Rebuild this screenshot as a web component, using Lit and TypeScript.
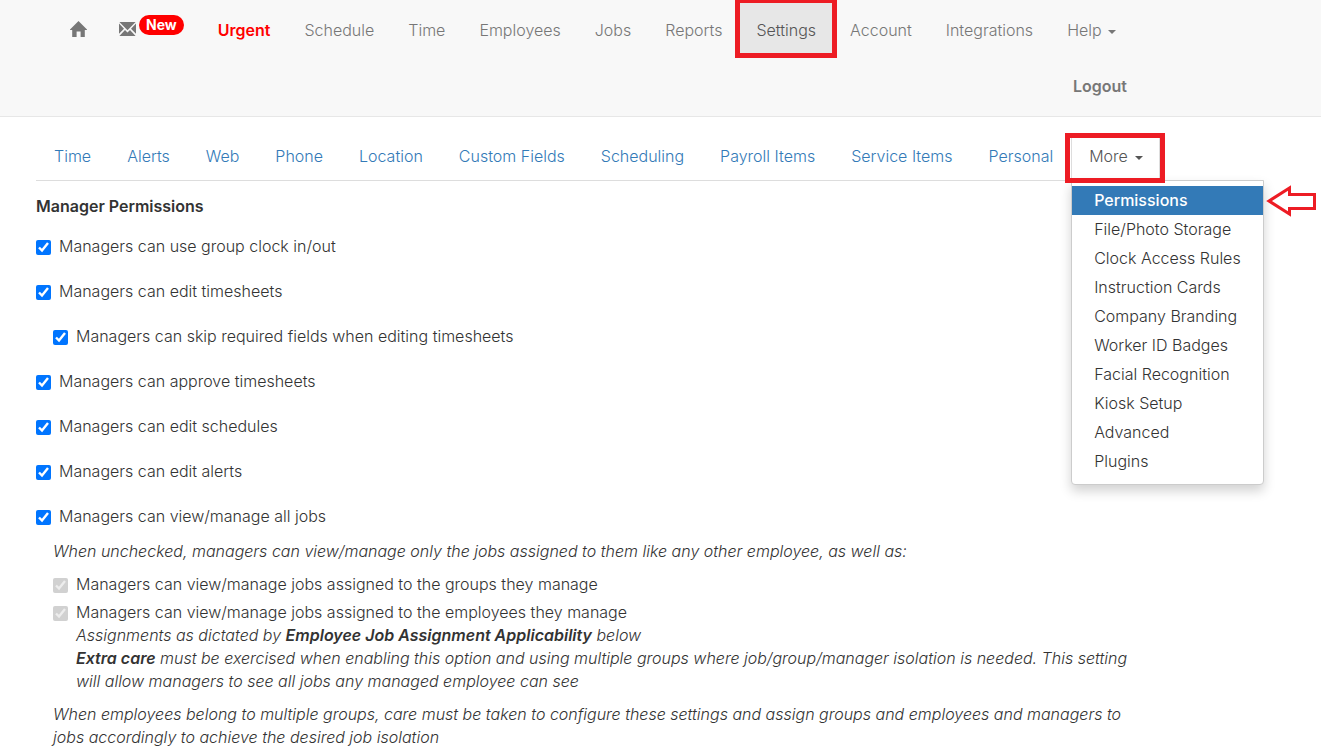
import { LitElement, html, css, svg } from "lit";
import { customElement, property, state } from "lit/decorators.js";

const MAIN_LINKS = ["Schedule", "Time", "Employees", "Jobs", "Reports", "Settings", "Account", "Integrations"];

const TABS = [
  "Time",
  "Alerts",
  "Web",
  "Phone",
  "Location",
  "Custom Fields",
  "Scheduling",
  "Payroll Items",
  "Service Items",
  "Personal",
];

const MORE_ITEMS = [
  "Permissions",
  "File/Photo Storage",
  "Clock Access Rules",
  "Instruction Cards",
  "Company Branding",
  "Worker ID Badges",
  "Facial Recognition",
  "Kiosk Setup",
  "Advanced",
  "Plugins",
];

const OPTIONS = [
  { id: "clock", label: "Managers can use group clock in/out", nested: false },
  { id: "edit-ts", label: "Managers can edit timesheets", nested: false },
  { id: "skip", label: "Managers can skip required fields when editing timesheets", nested: true },
  { id: "approve", label: "Managers can approve timesheets", nested: false },
  { id: "schedules", label: "Managers can edit schedules", nested: false },
  { id: "alerts", label: "Managers can edit alerts", nested: false },
  { id: "jobs", label: "Managers can view/manage all jobs", nested: false },
];

const homeIcon = svg`<svg class="icon" width="17" height="16" viewBox="0 0 17 16" aria-hidden="true">
  <path fill="currentColor" d="M8.5 0 L17 8.4 V9 H14.8 V16 H10.6 V10.4 H6.6 V16 H2.2 V9 H0 V8.4 Z"/>
</svg>`;

const mailIcon = svg`<svg class="icon" width="17" height="14" viewBox="0 0 17 14" aria-hidden="true">
  <path fill="currentColor" d="M0.4 0 H16.6 L8.5 8.2 Z M0 1.6 L5 6.8 L0 11.8 Z M17 1.6 L12 6.8 L17 11.8 Z M0.4 14 L6 7.9 L8.5 10.4 L11 7.9 L16.6 14 Z"/>
</svg>`;

@customElement("top-nav")
export class TopNav extends LitElement {
  static styles = css`
    :host {
      display: block;
      background: #f8f8f8;
      border-bottom: 1px solid #e7e7e7;
    }
    .inner {
      display: flex;
      flex-direction: column;
      padding: 2px 177px 2px 53px;
    }
    .links {
      display: flex;
      list-style: none;
      margin: 0;
      padding: 0;
    }
    .links.end {
      justify-content: flex-end;
    }
    .item {
      position: relative;
    }
    .link {
      display: flex;
      align-items: center;
      height: 56px;
      padding: 0 17px;
      color: #777;
      text-decoration: none;
      white-space: nowrap;
    }
    .compact {
      padding: 0 17px 0 15px;
    }
    .urgent {
      color: #f00;
      font-weight: 600;
    }
    .strong {
      font-weight: 600;
    }
    .active {
      background: #e7e7e7;
      color: #555;
    }
    .icon {
      display: block;
      margin-bottom: 3px;
    }
    .badge {
      margin: 0 0 11px 3px;
      padding: 0 7px;
      border-radius: 10px;
      background: #f00;
      color: #fff;
      font-size: 14px;
      font-weight: 700;
      line-height: 20px;
    }
    .caret {
      margin: 3px 0 0 6px;
      border: 4px solid transparent;
      border-top-color: currentColor;
      border-bottom: 0;
    }
    .mark {
      position: absolute;
      inset: -4px -4px 0 -4px;
      border: 5px solid #ed1c24;
      pointer-events: none;
    }
  `;

  render() {
    return html`<nav class="inner" aria-label="Main">
      <ul class="links">
        <li class="item"><a class="link" href="#home" aria-label="Home">${homeIcon}</a></li>
        <li class="item">
          <a class="link compact" href="#messages" aria-label="Messages">${mailIcon}<span class="badge">New</span></a>
        </li>
        <li class="item"><a class="link urgent" href="#urgent">Urgent</a></li>
        ${MAIN_LINKS.map(
          (name) => html`<li class="item">
            <a class="link ${name === "Settings" ? "active" : ""}" href="#${name.toLowerCase()}">${name}</a>
            ${name === "Settings" ? html`<span class="mark"></span>` : ""}
          </li>`
        )}
        <li class="item"><a class="link" href="#help">Help<span class="caret"></span></a></li>
      </ul>
      <ul class="links end">
        <li class="item"><a class="link strong" href="#logout">Logout</a></li>
      </ul>
    </nav>`;
  }
}

@customElement("settings-tabs")
export class SettingsTabs extends LitElement {
  @state() private open = true;

  static styles = css`
    :host {
      display: block;
    }
    .tabs {
      display: flex;
      list-style: none;
      margin: 0;
      padding: 0;
      border-bottom: 1px solid #ddd;
    }
    .item {
      position: relative;
      margin-right: 1px;
    }
    .tab {
      display: flex;
      align-items: center;
      box-sizing: border-box;
      height: 46px;
      margin: 0;
      padding: 0 16px 2px 17px;
      border: 1px solid transparent;
      background: none;
      color: #337ab7;
      font: inherit;
      text-decoration: none;
      white-space: nowrap;
    }
    .more {
      border-color: #ddd;
      border-bottom-color: transparent;
      background: #fff;
      color: #555;
    }
    .caret {
      margin: 3px 0 0 7px;
      border: 4px solid transparent;
      border-top-color: currentColor;
      border-bottom: 0;
    }
    .mark {
      position: absolute;
      z-index: 3;
      inset: -1px -5px -3px -6px;
      border: 5px solid #ed1c24;
      pointer-events: none;
    }
    .menu {
      position: absolute;
      z-index: 2;
      top: 100%;
      left: 0;
      box-sizing: border-box;
      width: 193px;
      list-style: none;
      margin: 0;
      padding: 5px 0 8px;
      border: 1px solid #ccc;
      border-radius: 0 0 4px 4px;
      background: #fff;
      box-shadow: 0 6px 12px rgba(0, 0, 0, 0.18);
    }
    .entry {
      display: block;
      padding: 3px 0 3px 22px;
      color: #333;
      line-height: 23px;
      text-decoration: none;
      white-space: nowrap;
    }
    .current {
      background: #337ab7;
      color: #fff;
      font-weight: 500;
    }
    .arrow {
      position: absolute;
      top: 4px;
      left: 193px;
    }
  `;

  render() {
    return html`<nav aria-label="Settings">
      <ul class="tabs">
        ${TABS.map((name) => html`<li class="item"><a class="tab" href="#settings">${name}</a></li>`)}
        <li class="item">
          <button class="tab more" aria-expanded=${this.open} @click=${() => (this.open = !this.open)}>
            More<span class="caret"></span>
          </button>
          <span class="mark"></span>
          ${this.open
            ? html`<ul class="menu">
                ${MORE_ITEMS.map(
                  (name, i) =>
                    html`<li><a class="entry ${i === 0 ? "current" : ""}" href="#more">${name}</a></li>`
                )}
                <svg class="arrow" width="52" height="34" viewBox="0 0 52 34" aria-hidden="true">
                  <path
                    d="M4 16 L24.5 3 V9.5 H49.5 V23.5 H24.5 V29 Z"
                    fill="#fff"
                    stroke="#ed1c24"
                    stroke-width="3"
                  />
                </svg>
              </ul>`
            : ""}
        </li>
      </ul>
    </nav>`;
  }
}

@customElement("check-row")
export class CheckRow extends LitElement {
  @property() label = "";
  @property({ type: Boolean }) disabled = false;

  static styles = css`
    :host {
      display: block;
    }
    .row {
      display: flex;
      align-items: center;
      gap: 8px;
      line-height: 23px;
    }
    .box {
      flex: none;
      width: 15px;
      height: 15px;
      margin: 2px 0 0;
    }
  `;

  render() {
    return html`<label class="row">
      <input class="box" type="checkbox" checked ?disabled=${this.disabled} />
      <span>${this.label}</span>
    </label>`;
  }
}

@customElement("app-root")
export class AppRoot extends LitElement {
  static styles = css`
    :host {
      display: block;
      min-height: 100vh;
      background: #fff;
      color: #333;
      font-family: Inter, "Liberation Sans", sans-serif;
      font-size: 16px;
      font-weight: 350;
      line-height: 23px;
    }
    .page {
      padding: 17px 58px 0 36px;
    }
    .title {
      margin: 14px 0 17px;
      font-size: 16px;
      font-weight: 600;
      line-height: 23px;
    }
    .options {
      display: flex;
      flex-direction: column;
      gap: 22px;
    }
    .nested {
      margin-left: 17px;
    }
    .details {
      display: flex;
      flex-direction: column;
      margin: 12px 118px 0 17px;
    }
    .note {
      margin: 0;
      font-style: italic;
    }
    .group {
      display: flex;
      flex-direction: column;
      gap: 5px;
      margin: 10px 0 0;
    }
    .sub {
      margin: 0 0 10px 23px;
    }
    .key {
      font-weight: 600;
    }
  `;

  render() {
    return html`
      <top-nav></top-nav>
      <main class="page">
        <settings-tabs></settings-tabs>
        <h1 class="title">Manager Permissions</h1>
        <div class="options">
          ${OPTIONS.map((o) => html`<check-row class=${o.nested ? "nested" : ""} label=${o.label}></check-row>`)}
        </div>
        <div class="details">
          <p class="note">
            When unchecked, managers can view/manage only the jobs assigned to them like any other employee, as well as:
          </p>
          <div class="group">
            <check-row disabled label="Managers can view/manage jobs assigned to the groups they manage"></check-row>
            <check-row disabled label="Managers can view/manage jobs assigned to the employees they manage"></check-row>
          </div>
          <div class="sub">
            <p class="note">
              Assignments as dictated by <b class="key">Employee Job Assignment Applicability</b> below
            </p>
            <p class="note">
              <b class="key">Extra care</b> must be exercised when enabling this option and using multiple groups where
              job/group/manager isolation is needed. This setting will allow managers to see all jobs any managed
              employee can see
            </p>
          </div>
          <p class="note">
            When employees belong to multiple groups, care must be taken to configure these settings and assign groups
            and employees and managers to jobs accordingly to achieve the desired job isolation
          </p>
        </div>
      </main>
    `;
  }
}
